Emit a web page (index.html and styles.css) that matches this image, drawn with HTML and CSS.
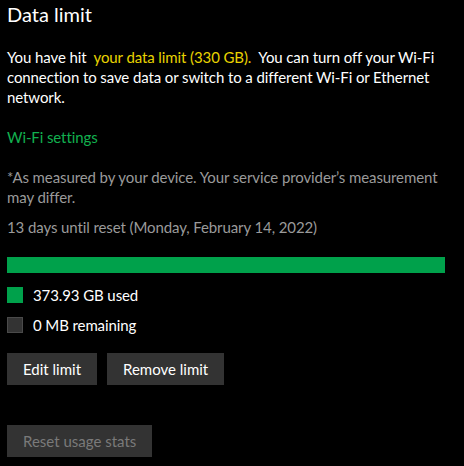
FILE: index.html
```html
<!DOCTYPE html>
<html lang="en">
<head>
<meta charset="utf-8">
<title>Data limit</title>
<link rel="stylesheet" href="styles.css">
</head>
<body>
<main class="page">
  <h1 class="title">Data limit</h1>
  <p class="notice"><span>You have hit</span><span class="hl">your data limit (330 GB).</span><span>You can turn off your Wi-Fi</span> <span>connection to save data or switch to a different Wi-Fi or Ethernet network.</span></p>
  <a class="link" href="#">Wi-Fi settings</a>
  <p class="note">*As measured by your device. Your service provider’s measurement may differ.</p>
  <p class="reset">13 days until reset (Monday, February 14, 2022)</p>
  <div class="bar"><div class="bar-fill" style="width:100%"></div></div>
  <ul class="legend">
    <li class="legend-row"><span class="swatch used"></span><span>373.93 GB used</span></li>
    <li class="legend-row"><span class="swatch remaining"></span><span>0 MB remaining</span></li>
  </ul>
  <div class="actions">
    <button class="btn">Edit limit</button>
    <button class="btn">Remove limit</button>
  </div>
  <div class="actions reset-actions">
    <button class="btn" disabled>Reset usage stats</button>
  </div>
</main>
</body>
</html>
```

FILE: styles.css
```css
html, body {
  margin: 0;
  padding: 0;
  background: #000;
}
body {
  font-family: "Lato", "Liberation Sans", sans-serif;
  font-size: 15px;
  line-height: 20px;
  letter-spacing: -0.1px;
  color: #fff;
}
.page {
  width: 445px;
  padding: 0 0 0 7px;
  display: flex;
  flex-direction: column;
  align-items: flex-start;
}
.title {
  margin: 0;
  font-size: 20px;
  line-height: 28px;
  font-weight: 400;
  letter-spacing: 0;
}
.notice {
  margin: 19px 0 0;
}
.hl {
  color: #e8d300;
  margin: 0 7px;
}
.link {
  margin-top: 20px;
  color: #12b04f;
  text-decoration: none;
}
.note {
  margin: 20px 0 0;
  color: #9a9a9a;
}
.reset {
  margin: 10px 0 0;
  color: #9a9a9a;
}
.bar {
  margin-top: 20px;
  width: 438px;
  height: 16px;
  background: #333;
}
.bar-fill {
  height: 100%;
  background: #00a14b;
}
.legend {
  list-style: none;
  margin: 12px 0 0;
  padding: 0;
  display: flex;
  flex-direction: column;
  gap: 10px;
}
.legend-row {
  display: flex;
  align-items: center;
  gap: 10px;
  height: 20px;
}
.swatch {
  width: 16px;
  height: 16px;
  box-sizing: border-box;
}
.swatch.used {
  background: #00a14b;
}
.swatch.remaining {
  background: #333;
  border: 1px solid #4a4a4a;
}
.actions {
  margin-top: 18px;
  display: flex;
  gap: 10px;
}
.reset-actions {
  margin-top: 40px;
}
.btn {
  font: inherit;
  height: 32px;
  padding: 0 16px;
  border: 0;
  background: #333;
  color: #fff;
}
.btn:disabled {
  color: #7a7a7a;
}
```
